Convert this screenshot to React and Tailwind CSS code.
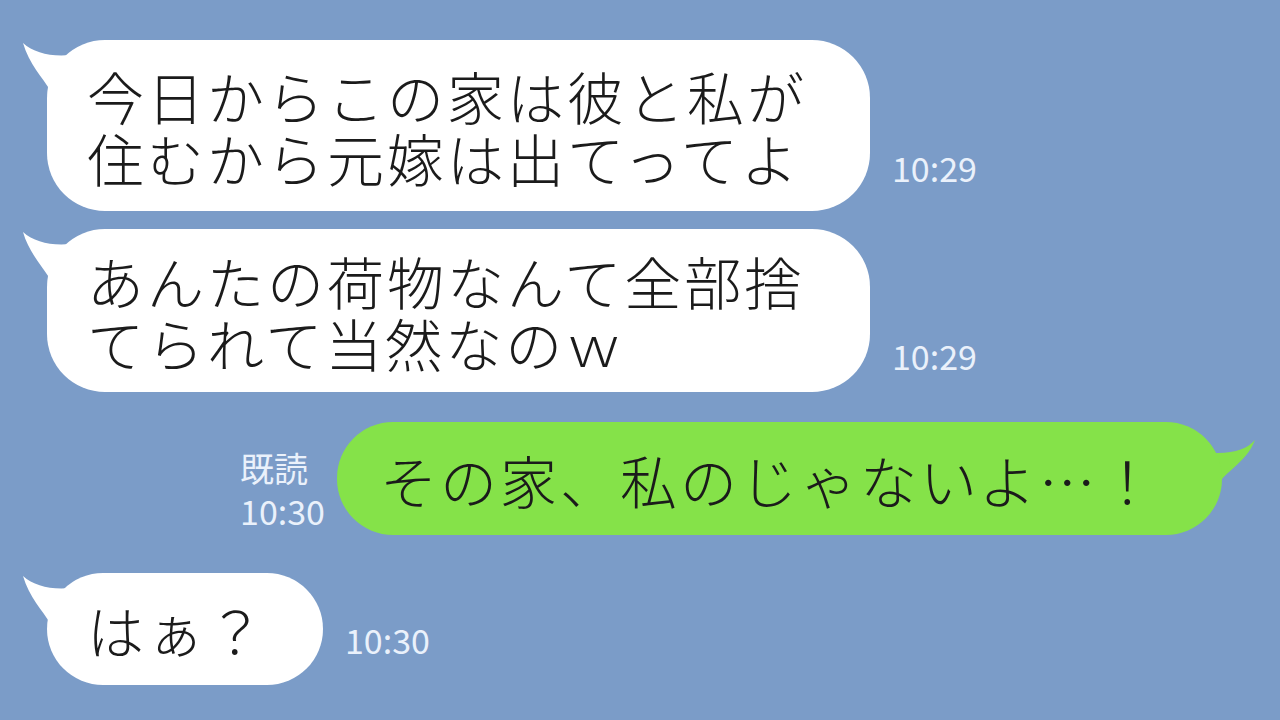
import React from 'react';

const font = { fontFamily: '"Noto Sans CJK JP", "Noto Sans", sans-serif' };

const LeftTail = () => (
  <svg className="absolute left-[-26px] top-0" width="90" height="72" viewBox="0 0 90 72">
    <path d="M2 3 C13 13 30 17 50 15 L62 11 L62 72 L30 72 L29 50 C22 38 8 24 2 3 Z" fill="#ffffff" />
  </svg>
);

const RightTail = () => (
  <svg className="absolute right-[-36px] top-0" width="80" height="70" viewBox="0 0 80 70">
    <path d="M77 18 C70 26 58 31 40 31 L10 31 L10 66 L39 66 C42 52 68 42 77 18 Z" fill="#85e249" />
  </svg>
);

const Time = ({ children, className }) => (
  <div className={`text-[34px] leading-none text-[#eaf1fb] ${className}`}>{children}</div>
);

const WhiteBubble = ({ lines, className }) => (
  <div className={`relative ${className}`}>
    <LeftTail />
    <div className="relative flex h-full items-center rounded-[58px] bg-white pl-[40px]">
      <p className="text-[57px] font-light leading-[62px] tracking-[3px] text-[#1b1b1b]">
        {lines.map((l, i) => (
          <span key={i} className="block whitespace-nowrap">{l}</span>
        ))}
      </p>
    </div>
  </div>
);

const App = () => {
  return (
    <div className="h-[720px] w-[1280px] overflow-hidden bg-[#7b9cc8]" style={font}>
      <div className="flex flex-col pl-[47px] pt-[40px]">
        <div className="flex items-end gap-[22px]">
          <WhiteBubble className="h-[171px] w-[823px]" lines={['今日からこの家は彼と私が', '住むから元嫁は出てってよ']} />
          <Time className="mb-[26px]">10:29</Time>
        </div>

        <div className="mt-[18px] flex items-end gap-[22px]">
          <WhiteBubble className="h-[163px] w-[823px]" lines={['あんたの荷物なんて全部捨', 'てられて当然なのｗ']} />
          <Time className="mb-[19px]">10:29</Time>
        </div>

        <div className="mt-[30px] flex items-end justify-end gap-[12px] pr-[58px]">
          <div className="mb-[7px] flex flex-col items-start gap-[9px]">
            <Time>既読</Time>
            <Time>10:30</Time>
          </div>
          <div className="relative h-[113px] w-[885px]">
            <RightTail />
            <div className="relative flex h-full items-center rounded-[56px] bg-[#85e249] pl-[43px]">
              <p className="whitespace-nowrap text-[57px] font-light leading-[62px] tracking-[3px] text-[#1b1b1b]">
                その家、私のじゃないよ…！
              </p>
            </div>
          </div>
        </div>

        <div className="mt-[38px] flex items-end gap-[22px]">
          <WhiteBubble className="h-[112px] w-[276px]" lines={['はぁ？']} />
          <Time className="mb-[28px]">10:30</Time>
        </div>
      </div>
    </div>
  );
};

export default App;
